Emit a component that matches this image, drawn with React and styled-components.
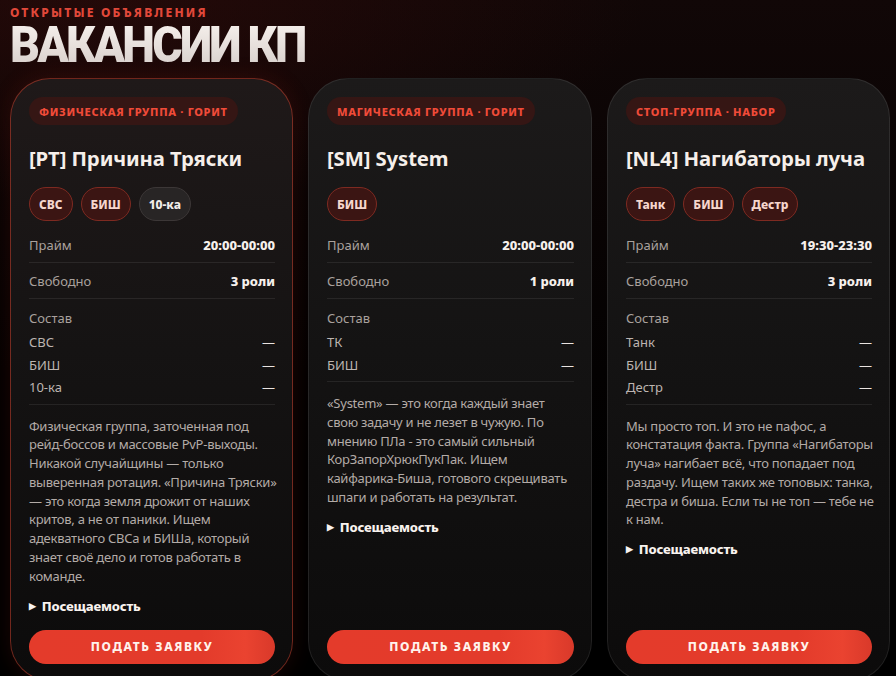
import React from "react";
import styled, { createGlobalStyle, css } from "styled-components";

const GlobalStyle = createGlobalStyle`
  html, body {
    margin: 0;
    padding: 0;
    background: #000;
  }
  body {
    font-family: "Noto Sans", "Open Sans", sans-serif;
    color: #f3ece8;
    overflow: hidden;
  }
  * { box-sizing: border-box; }
`;

const Page = styled.div`
  width: 896px;
  height: 676px;
  overflow: hidden;
  padding: 4px 6px 0 10px;
  background:
    radial-gradient(ellipse 60% 30% at 12% 0%, rgba(55, 12, 10, 0.5), rgba(0, 0, 0, 0) 100%),
    linear-gradient(180deg, #110707 0%, #0a0404 25%, #030101 55%, #000 75%);
`;

const Eyebrow = styled.div`
  font-size: 12px;
  font-weight: 800;
  letter-spacing: 2.2px;
  line-height: 18px;
  color: #e0483a;
`;

const Title = styled.h1`
  margin: 0;
  display: inline-block;
  font-family: "Roboto", "Inter", sans-serif;
  font-size: 50px;
  font-weight: 900;
  letter-spacing: -3px;
  line-height: 46px;
  color: #ebe4e0;
  transform: scaleX(0.93);
  transform-origin: 0 50%;
  background: linear-gradient(180deg, #f6f0ec 0%, #d8d0cc 100%);
  -webkit-background-clip: text;
  background-clip: text;
  -webkit-text-fill-color: transparent;
`;

const Grid = styled.div`
  margin-top: 10px;
  display: grid;
  grid-template-columns: 283px 284px 283px;
  column-gap: 15px;
  align-items: stretch;
`;

const Card = styled.article`
  display: flex;
  flex-direction: column;
  padding: 18px 15px 16px 18px;
  border-radius: 40px;
  border: 1px solid rgba(255, 255, 255, 0.09);
  background: linear-gradient(180deg, #1c1a1a 0%, #141313 45%, #0c0b0b 100%);
  ${(p) =>
    p.$hot &&
    css`
      border-color: rgba(196, 62, 44, 0.55);
      background: linear-gradient(180deg, #1f1919 0%, #151313 45%, #0c0b0b 100%);
      box-shadow: 0 0 22px rgba(170, 40, 25, 0.16);
    `}
`;

const Badge = styled.div`
  align-self: flex-start;
  height: 28px;
  display: flex;
  align-items: center;
  padding: 0 10px;
  border-radius: 14px;
  background: #351614;
  color: #f04b39;
  font-size: 11px;
  font-weight: 800;
  letter-spacing: 0.7px;
`;

const CardTitle = styled.h2`
  margin: 20px 0 0 0;
  font-size: 20.3px;
  font-weight: 700;
  line-height: 26px;
  color: #f6efea;
  letter-spacing: -0.1px;
  white-space: nowrap;
`;

const Chips = styled.div`
  display: flex;
  gap: 8px;
  margin-top: 16px;
`;

const Chip = styled.span`
  height: 34px;
  display: inline-flex;
  align-items: center;
  padding: 0 9px;
  border-radius: 17px;
  font-size: 12px;
  font-weight: 800;
  border: 1px solid ${(p) => (p.$muted ? "#3c3737" : "#7e2a21")};
  background: ${(p) => (p.$muted ? "#282525" : "#3b1513")};
  color: ${(p) => (p.$muted ? "#f1ece9" : "#f6d6cd")};
`;

const Stats = styled.div`
  margin-top: 6px;
  margin-right: 2px;
  display: flex;
  flex-direction: column;
`;

const InfoRow = styled.div`
  display: flex;
  justify-content: space-between;
  align-items: center;
  height: 36px;
  border-bottom: 1px solid rgba(255, 255, 255, 0.08);
  font-size: 13px;
`;

const Label = styled.span`
  color: #a9a19d;
`;

const Value = styled.span`
  font-weight: 800;
  color: #f6f0ec;
`;

const Roster = styled.div`
  display: flex;
  flex-direction: column;
  margin-right: 2px;
  padding: 10px 0 5px;
  border-bottom: 1px solid rgba(255, 255, 255, 0.08);
  font-size: 13px;
`;

const RosterHead = styled.div`
  color: #a9a19d;
  line-height: 18px;
  margin-bottom: 4px;
`;

const RosterItem = styled.div`
  display: flex;
  justify-content: space-between;
  line-height: 22.5px;
  color: #bdb5b1;
`;

const Dash = styled.span`
  color: #e9e3e0;
`;

const Text = styled.p`
  margin: 12px 0 0 0;
  font-size: 13px;
  line-height: 18.8px;
  letter-spacing: -0.25px;
  color: #b3aba7;
`;

const Attendance = styled.details`
  margin-top: 11px;
  font-size: 13px;
  font-weight: 800;
  color: #f8f2ee;
  letter-spacing: -0.2px;
  summary {
    list-style: none;
    display: flex;
    align-items: center;
    gap: 6px;
    line-height: 18px;
    cursor: pointer;
  }
  summary::-webkit-details-marker {
    display: none;
  }
`;

const Arrow = styled.span`
  font-size: 9px;
  line-height: 18px;
`;

const ApplyButton = styled.button`
  margin-top: auto;
  margin-right: 2px;
  height: 34px;
  border: none;
  border-radius: 17px;
  background: linear-gradient(90deg, #e43b2b 0%, #e33b2b 70%, #ea4330 88%, #d9392a 100%);
  color: #fff2ec;
  font-family: "Noto Sans", sans-serif;
  font-size: 12px;
  font-weight: 800;
  letter-spacing: 1.6px;
  cursor: pointer;
`;

const Spacer = styled.div`
  height: 15px;
  flex: none;
`;

const groups = [
  {
    hot: true,
    badge: "ФИЗИЧЕСКАЯ ГРУППА · ГОРИТ",
    title: "[PT] Причина Тряски",
    chips: [{ t: "СВС" }, { t: "БИШ" }, { t: "10-ка", muted: true }],
    prime: "20:00-00:00",
    free: "3 роли",
    roster: ["СВС", "БИШ", "10-ка"],
    text:
      "Физическая группа, заточенная под рейд-боссов и массовые PvP-выходы. Никакой случайщины — только выверенная ротация. «Причина Тряски» — это когда земля дрожит от наших критов, а не от паники. Ищем адекватного СВСа и БИШа, который знает своё дело и готов работать в команде.",
  },
  {
    badge: "МАГИЧЕСКАЯ ГРУППА · ГОРИТ",
    title: "[SM] System",
    chips: [{ t: "БИШ" }],
    prime: "20:00-00:00",
    free: "1 роли",
    roster: ["ТК", "БИШ"],
    text:
      "«System» — это когда каждый знает свою задачу и не лезет в чужую. По мнению ПЛа - это самый сильный КорЗапорХрюкПукПак. Ищем кайфарика-Биша, готового скрещивать шпаги и работать на результат.",
  },
  {
    badge: "СТОП-ГРУППА · НАБОР",
    title: "[NL4] Нагибаторы луча",
    chips: [{ t: "Танк" }, { t: "БИШ" }, { t: "Дестр" }],
    prime: "19:30-23:30",
    free: "3 роли",
    roster: ["Танк", "БИШ", "Дестр"],
    text:
      "Мы просто топ. И это не пафос, а констатация факта. Группа «Нагибаторы луча» нагибает всё, что попадает под раздачу. Ищем таких же топовых: танка, дестра и биша. Если ты не топ — тебе не к нам.",
  },
];

export default function App() {
  return (
    <>
      <GlobalStyle />
      <Page>
        <Eyebrow>ОТКРЫТЫЕ ОБЪЯВЛЕНИЯ</Eyebrow>
        <Title>ВАКАНСИИ КП</Title>
        <Grid>
          {groups.map((g) => (
            <Card key={g.title} $hot={g.hot}>
              <Badge>{g.badge}</Badge>
              <CardTitle>{g.title}</CardTitle>
              <Chips>
                {g.chips.map((c) => (
                  <Chip key={c.t} $muted={c.muted}>
                    {c.t}
                  </Chip>
                ))}
              </Chips>
              <Stats>
                <InfoRow>
                  <Label>Прайм</Label>
                  <Value>{g.prime}</Value>
                </InfoRow>
                <InfoRow>
                  <Label>Свободно</Label>
                  <Value>{g.free}</Value>
                </InfoRow>
              </Stats>
              <Roster>
                <RosterHead>Состав</RosterHead>
                {g.roster.map((r) => (
                  <RosterItem key={r}>
                    <span>{r}</span>
                    <Dash>—</Dash>
                  </RosterItem>
                ))}
              </Roster>
              <Text>{g.text}</Text>
              <Attendance>
                <summary>
                  <Arrow>▶</Arrow>
                  Посещаемость
                </summary>
              </Attendance>
              <Spacer />
              <ApplyButton>ПОДАТЬ ЗАЯВКУ</ApplyButton>
            </Card>
          ))}
        </Grid>
      </Page>
    </>
  );
}
